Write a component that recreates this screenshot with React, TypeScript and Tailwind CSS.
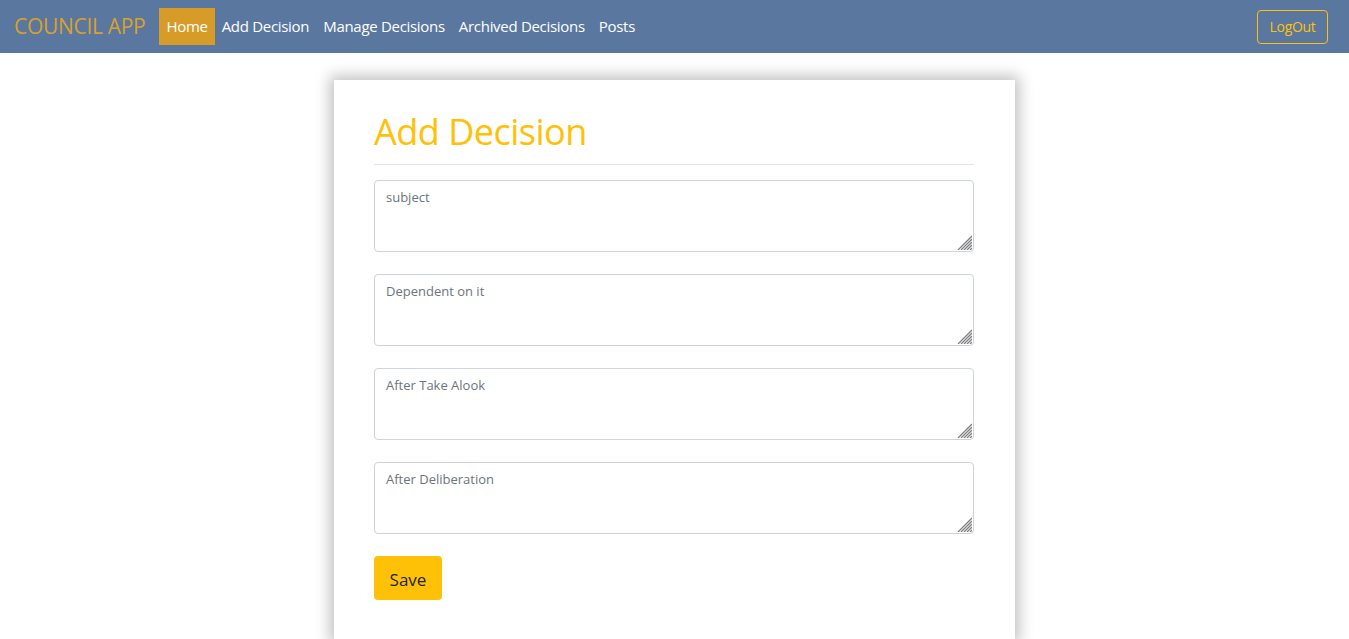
import React from "react";

const font = { fontFamily: '"Open Sans", "Noto Sans", sans-serif' };

function Grip() {
  const offs = [1, 4, 7, 10, 13];
  return (
    <svg
      className="absolute right-[2px] bottom-[2px] pointer-events-none"
      width="15"
      height="15"
      viewBox="0 0 15 15"
    >
      {offs.map((o) => (
        <line key={o} x1={o} y1={15} x2={15} y2={o} stroke="#808080" strokeWidth="1.3" />
      ))}
    </svg>
  );
}

export default function App() {
  const fields = ["subject", "Dependent on it", "After Take Alook", "After Deliberation"];
  return (
    <div className="min-h-[639px] bg-white" style={font}>
      <nav className="h-[53px] bg-[#5a77a0] flex items-center pl-[14px] pr-[21px]">
        <span className="text-[21px] text-[#d9a12a] tracking-[-0.3px] mr-[14px]">COUNCIL APP</span>
        <div className="flex items-center text-[15px] text-white tracking-[-0.3px]">
          <span className="bg-[#d69c27] h-[37px] px-[7px] flex items-center">Home</span>
          <span className="px-[7px]">Add Decision</span>
          <span className="px-[7px]">Manage Decisions</span>
          <span className="px-[7px]">Archived Decisions</span>
          <span className="px-[7px]">Posts</span>
        </div>
        <div className="flex-1" />
        <button className="h-[34px] w-[71px] border border-[#ffc107] rounded-[4px] text-[#ffc107] text-[14px] tracking-[-0.3px]">
          LogOut
        </button>
      </nav>
      <div className="pt-[27px]">
        <div className="w-[681px] mx-auto bg-white shadow-[0_0_14px_4px_rgba(0,0,0,0.25)] pl-[40px] pr-[41px] pt-[26px] pb-[40px] min-h-[560px]">
          <h1 className="text-[36px] text-[#ffc107] leading-[52px] tracking-[-0.5px] pb-[6px] border-b border-[#e5e5e5] mb-[15px]">
            Add Decision
          </h1>
          <div className="flex flex-col gap-[22px]">
            {fields.map((f) => (
              <div key={f} className="relative">
                <textarea
                  placeholder={f}
                  className="w-full h-[72px] border border-[#ced4da] rounded-[4px] px-[11px] pt-[7px] text-[13px] placeholder:text-[#6c757d] outline-none block resize-none"
                  style={font}
                />
                <Grip />
              </div>
            ))}
          </div>
          <button className="mt-[22px] h-[44px] w-[68px] bg-[#ffc107] rounded-[4px] text-[17px] text-[#212529] pt-[3px]">
            Save
          </button>
        </div>
      </div>
    </div>
  );
}
